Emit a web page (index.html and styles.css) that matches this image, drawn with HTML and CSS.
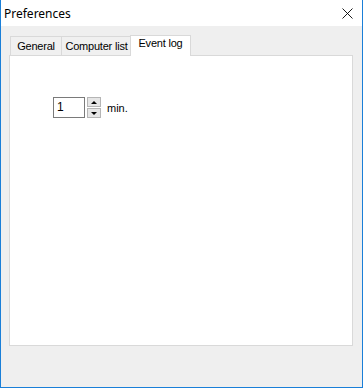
FILE: index.html
```html
<!DOCTYPE html>
<html lang="en">
<head>
    <meta charset="UTF-8">
    <title>Preferences</title>
    <link rel="stylesheet" href="styles.css">
</head>
<body>
<div class="window">
    <div class="titlebar">
        <span class="title">Preferences</span>
        <svg class="close" width="11" height="11" viewBox="0 0 11 11">
            <path d="M0.5 0.5 L10.5 10.5 M10.5 0.5 L0.5 10.5" stroke="#000" stroke-width="0.9" fill="none"/>
        </svg>
    </div>

    <div class="body">
        <div class="tabs">
            <div class="tab tab-general">General</div>
            <div class="tab tab-computers">Computer list</div>
            <div class="tab tab-log active">Event log</div>
        </div>
        <div class="panel">
            <div class="interval">
                <div class="edit">1</div>
                <div class="spin">
                    <div class="spin-btn"><span class="arrow-up"></span></div>
                    <div class="spin-btn"><span class="arrow-down"></span></div>
                </div>
                <span class="unit">min.</span>
            </div>
        </div>
    </div>
</div>
</body>
</html>
```

FILE: styles.css
```css
body {
    margin: 0;
    font-family: "Liberation Sans", Arial, sans-serif;
    font-size: 11px;
    color: #000;
}
.window {
    width: 363px;
    height: 388px;
    box-sizing: border-box;
    border: 1px solid #1a7fd8;
    border-top: 0;
    background: #efefef;
    display: flex;
    flex-direction: column;
}
.titlebar {
    height: 26px;
    background: #fff;
    display: flex;
    align-items: center;
    justify-content: space-between;
    padding: 0 9px 0 3px;
}
.title {
    font-family: "Noto Sans", "Open Sans", sans-serif;
    font-size: 12px;
}
.close {
    display: block;
}
.body {
    padding: 9px 9px 0 8px;
}
.tabs {
    display: flex;
    height: 20px;
    padding-left: 1px;
    align-items: flex-end;
}
.tab {
    box-sizing: border-box;
    height: 19px;
    border: 1px solid #d9d9d9;
    border-bottom: 0;
    background: #f0f0f0;
    text-align: center;
    line-height: 18px;
    letter-spacing: -0.2px;
}
.tab-general {
    width: 52px;
}
.tab-computers {
    width: 70px;
    border-left: 0;
}
.tab.active {
    width: 61px;
    height: 21px;
    margin-left: -2px;
    margin-bottom: -1px;
    position: relative;
    background: #fff;
    line-height: 14px;
}
.panel {
    height: 291px;
    box-sizing: border-box;
    border: 1px solid #d9d9d9;
    background: #fff;
    padding: 41px 0 0 43px;
}
.interval {
    display: flex;
    align-items: center;
}
.edit {
    box-sizing: border-box;
    width: 32px;
    height: 21px;
    border: 1px solid #7a7a7a;
    font-size: 12px;
    line-height: 19px;
    padding-left: 3px;
}
.spin {
    display: flex;
    flex-direction: column;
    margin-left: 2px;
}
.spin-btn {
    box-sizing: border-box;
    width: 14px;
    height: 10px;
    background: #e6e6e6;
    border: 1px solid #b5b5b5;
    display: flex;
    align-items: center;
    justify-content: center;
}
.spin-btn + .spin-btn {
    margin-top: 1px;
}
.arrow-up {
    border-left: 3px solid transparent;
    border-right: 3px solid transparent;
    border-bottom: 3px solid #000;
}
.arrow-down {
    border-left: 3px solid transparent;
    border-right: 3px solid transparent;
    border-top: 3px solid #000;
}
.unit {
    margin-left: 6px;
}
```
